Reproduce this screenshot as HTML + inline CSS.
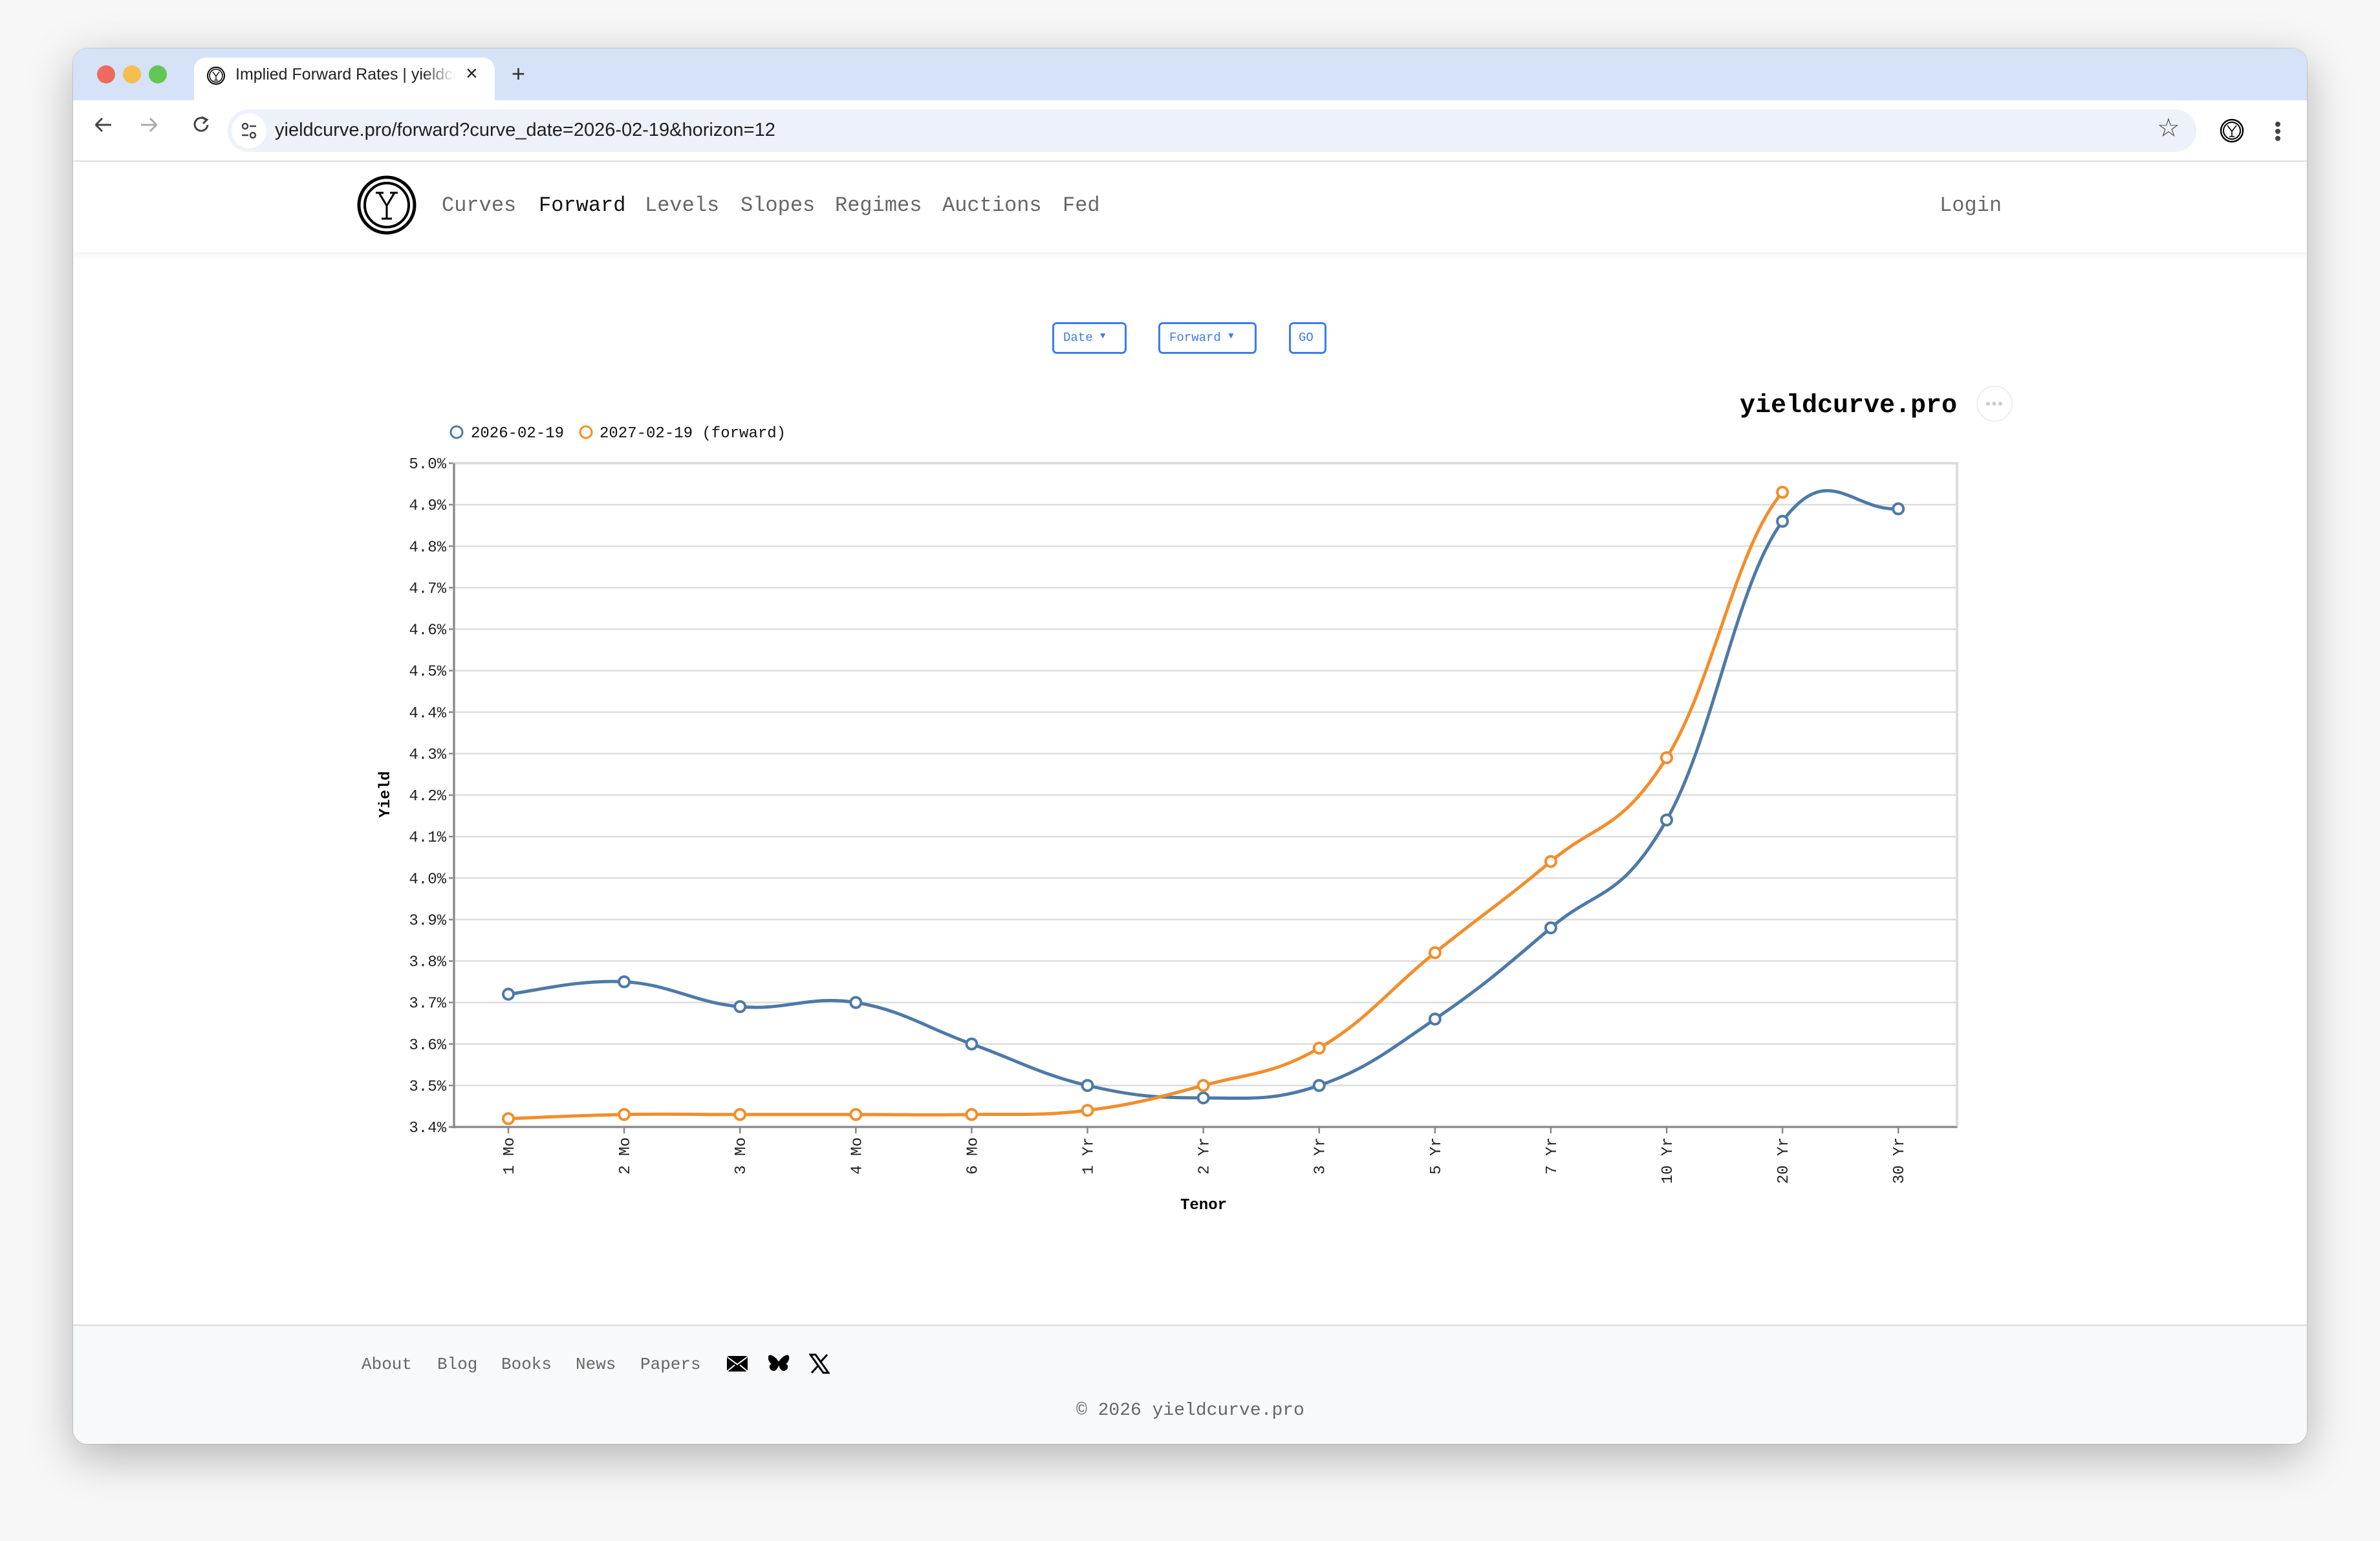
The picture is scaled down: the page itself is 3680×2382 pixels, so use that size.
<!DOCTYPE html>
<html><head><meta charset="utf-8">
<style>
*{margin:0;padding:0;box-sizing:border-box}
body{width:3680px;height:2382px;background:#f7f7f7;position:relative;overflow:hidden;font-family:"Liberation Mono",monospace}
.abs{position:absolute}
#win{left:113px;top:75px;width:3454px;height:2157px;border-radius:22px;background:#fff;overflow:hidden;box-shadow:0 20px 70px rgba(0,0,0,.28),0 0 0 1px rgba(0,0,0,.12)}
.sans{font-family:"Liberation Sans",sans-serif}
.nav a{position:absolute;top:224px;font-size:32px;color:#666;text-decoration:none}
.btn{position:absolute;top:423px;height:49px;border:3px solid #3b7ded;border-radius:7px;color:#3b7ded;font-size:19px;line-height:43px;padding:0 14px}
.ft{position:absolute;top:2019px;font-size:26px;color:#666}
</style></head><body>
<div id="win" class="abs">
 <div class="abs" style="left:0;top:0;width:3454px;height:80px;background:#d6e2f8"></div>
 <div class="abs" style="left:37px;top:26px;width:28px;height:28px;border-radius:50%;background:#ee6a5f"></div>
 <div class="abs" style="left:77px;top:26px;width:28px;height:28px;border-radius:50%;background:#f5be4f"></div>
 <div class="abs" style="left:117px;top:26px;width:28px;height:28px;border-radius:50%;background:#62c655"></div>
 <div class="abs" style="left:187px;top:14px;width:465px;height:70px;background:#fff;border-radius:18px 18px 0 0"></div>
 <svg class="abs" style="left:206px;top:27px" width="30" height="30" viewBox="0 0 30 30"><circle cx="15" cy="15" r="13" fill="none" stroke="#000" stroke-width="2"/><circle cx="15" cy="15" r="10" fill="none" stroke="#000" stroke-width="1.5"/><path d="M10 9l5 7 5-7M15 16v6M12 22h6" stroke="#000" fill="none" stroke-width="1.3"/></svg>
 <div class="abs sans" style="left:251px;top:26px;font-size:25px;color:#222;white-space:nowrap;width:340px;overflow:hidden;-webkit-mask-image:linear-gradient(90deg,#000 85%,transparent);mask-image:linear-gradient(90deg,#000 85%,transparent)">Implied Forward Rates | yieldcurve.pro</div>
 <div class="abs sans" style="left:607px;top:20px;font-size:32px;color:#222">×</div>
 <div class="abs sans" style="left:678px;top:18px;font-size:36px;color:#333">+</div>
 <svg class="abs" style="left:27px;top:98px" width="220" height="40" viewBox="0 0 220 40"><path d="M8 20h24M8 20l10-10M8 20l10 10" stroke="#444" stroke-width="3" fill="none"/><path d="M78 20h24M102 20l-10-10M102 20l-10 10" stroke="#aaa" stroke-width="3" fill="none"/><path d="M178 12a10 10 0 1 0 3 8" stroke="#444" stroke-width="3" fill="none"/><path d="M172 8l8 4-6 6" stroke="#444" stroke-width="3" fill="none"/></svg>
 <div class="abs" style="left:239px;top:94px;width:3044px;height:66px;border-radius:33px;background:#edf2fa"></div>
 <div class="abs" style="left:245px;top:100px;width:54px;height:54px;border-radius:27px;background:#fff"></div>
 <svg class="abs" style="left:257px;top:112px" width="30" height="30" viewBox="0 0 30 30"><circle cx="9" cy="8" r="4" fill="none" stroke="#444" stroke-width="2.5"/><path d="M16 8h10M4 22h10" stroke="#444" stroke-width="2.5"/><circle cx="21" cy="22" r="4" fill="none" stroke="#444" stroke-width="2.5"/></svg>
 <div class="abs sans" style="left:312px;top:110px;font-size:29px;color:#1f1f1f">yieldcurve.pro/forward?curve_date=2026-02-19&amp;horizon=12</div>
 <div class="abs sans" style="left:3222px;top:100px;font-size:40px;color:#444">☆</div>
 <svg class="abs" style="left:3319px;top:108px" width="38" height="38" viewBox="0 0 38 38"><circle cx="19" cy="19" r="17" fill="none" stroke="#000" stroke-width="2.5"/><circle cx="19" cy="19" r="13" fill="none" stroke="#000" stroke-width="2"/><path d="M12 11l7 9 7-9M19 20v8M15 28h8" stroke="#000" fill="none" stroke-width="1.6"/></svg>
 <div class="abs" style="left:3405px;top:113px;width:8px;height:8px;border-radius:4px;background:#444;box-shadow:0 11px 0 #444,0 22px 0 #444"></div>
 <div class="abs" style="left:0;top:173px;width:3454px;height:2px;background:#e2e2e2"></div>
 <div class="abs" style="left:0;top:175px;width:3454px;height:140px;background:#fff;box-shadow:0 4px 10px rgba(0,0,0,.06)"></div>
 <svg class="abs" style="left:438px;top:195px" width="94" height="94" viewBox="0 0 94 94"><circle cx="47" cy="47" r="43" fill="none" stroke="#000" stroke-width="5"/><circle cx="47" cy="47" r="34" fill="none" stroke="#000" stroke-width="4"/><path d="M30 28h12M52 28h12M35 28l12 20 12-20M47 48v20M39 68h16" stroke="#000" fill="none" stroke-width="3"/></svg>
 <div class="nav">
  <a style="left:570px">Curves</a><a style="left:720px;color:#111">Forward</a><a style="left:884px">Levels</a><a style="left:1032px">Slopes</a><a style="left:1178px">Regimes</a><a style="left:1344px">Auctions</a><a style="left:1530px">Fed</a><a style="left:2886px">Login</a>
 </div>
 <div class="btn" style="left:1514px;width:115px">Date <span style="font-size:14px;vertical-align:top;position:relative;top:-2px">▼</span></div>
 <div class="btn" style="left:1678px;width:152px">Forward <span style="font-size:14px;vertical-align:top;position:relative;top:-2px">▼</span></div>
 <div class="btn" style="left:1880px;width:58px;padding:0 12px">GO</div>
 <div class="abs" style="left:2577px;top:530px;font-size:40px;font-weight:bold;color:#000">yieldcurve.pro</div>
 <div class="abs" style="left:2943px;top:521px;width:56px;height:56px;border-radius:50%;border:2px solid #eee;color:#ccc;font-size:14px;text-align:center;line-height:50px;font-family:'Liberation Sans',sans-serif;letter-spacing:1px">●●●</div>
 <svg class="abs" id="chart" style="left:0;top:0" width="3454" height="2040"></svg>
 <div class="abs" style="left:0;top:1972px;width:3454px;height:185px;background:#f8f9fa;border-top:3px solid #e4e4e4"></div>
 <div class="ft" style="left:446px">About</div><div class="ft" style="left:563px">Blog</div><div class="ft" style="left:662px">Books</div><div class="ft" style="left:777px">News</div><div class="ft" style="left:877px">Papers</div>
 <svg class="abs" style="left:1010px;top:2020px" width="34" height="26" viewBox="0 0 34 26"><rect x="1" y="1" width="32" height="24" rx="3" fill="#000"/><path d="M2 3l15 11 15-11M2 24l11-9M32 24l-11-9" stroke="#fff" stroke-width="2" fill="none"/></svg>
 <svg class="abs" style="left:1074px;top:2018px" width="34" height="30" viewBox="0 0 34 30"><path d="M17 12C13 5 5 0 2 2c-3 3 0 12 4 13-5 2-4 9 2 11 4 1 8-4 9-9 1 5 5 10 9 9 6-2 7-9 2-11 4-1 7-10 4-13-3-2-11 3-15 10z" fill="#000"/></svg>
 <svg class="abs" style="left:1138px;top:2017px" width="32" height="32" viewBox="0 0 32 32"><path d="M2 2h8l20 28h-8z" fill="none" stroke="#000" stroke-width="3"/><path d="M28 2L17 14M4 30l11-12" stroke="#000" stroke-width="3"/></svg>
 <div class="ft" style="left:1551px;top:2090px;font-size:28px">© 2026 yieldcurve.pro</div>
</div>
<script>
(function(){
var svg=document.getElementById('chart');
var L=589,R=2913,T=641,B=1667;
function X(i){return 673+i*179.1;}
function Y(v){return T+(5.0-v)*641.25;}
var h='';
for(var k=0;k<=16;k++){var v=5.0-k*0.1,y=Y(v);
 h+='<line x1="'+L+'" x2="'+R+'" y1="'+y+'" y2="'+y+'" stroke="#ddd" stroke-width="2.5"/>';
 h+='<line x1="'+(L-8)+'" x2="'+L+'" y1="'+y+'" y2="'+y+'" stroke="#888" stroke-width="2.5"/>';
 h+='<text x="'+(L-12)+'" y="'+(y+8)+'" font-size="24" text-anchor="end" fill="#222" font-family="Liberation Mono,monospace">'+v.toFixed(1)+'%</text>';}
h+='<rect x="'+L+'" y="'+T+'" width="'+(R-L)+'" height="'+(B-T)+'" fill="none" stroke="#ddd" stroke-width="4"/>';
h+='<line x1="'+L+'" x2="'+L+'" y1="'+T+'" y2="'+(B+2)+'" stroke="#888" stroke-width="3"/>';
h+='<line x1="'+(L-8)+'" x2="'+R+'" y1="'+B+'" y2="'+B+'" stroke="#888" stroke-width="3"/>';
var labs=['1 Mo','2 Mo','3 Mo','4 Mo','6 Mo','1 Yr','2 Yr','3 Yr','5 Yr','7 Yr','10 Yr','20 Yr','30 Yr'];
for(var i=0;i<13;i++){var x=X(i);
 h+='<line x1="'+x+'" x2="'+x+'" y1="'+B+'" y2="'+(B+10)+'" stroke="#888" stroke-width="2.5"/>';
 h+='<text transform="translate('+(x+8)+','+(B+16)+') rotate(-90)" font-size="24" text-anchor="end" fill="#222" font-family="Liberation Mono,monospace">'+labs[i]+'</text>';}
h+='<text transform="translate(489,1153) rotate(-90)" font-size="24" font-weight="bold" text-anchor="middle" fill="#000" font-family="Liberation Mono,monospace">Yield</text>';
h+='<text x="1748" y="1794" font-size="24" font-weight="bold" text-anchor="middle" fill="#000" font-family="Liberation Mono,monospace">Tenor</text>';
h+='<circle cx="593" cy="593" r="9" fill="none" stroke="#4e79a7" stroke-width="3"/><text x="615" y="601" font-size="24" fill="#111" font-family="Liberation Mono,monospace">2026-02-19</text>';
h+='<circle cx="793" cy="593" r="9" fill="none" stroke="#f28e2b" stroke-width="3"/><text x="814" y="601" font-size="24" fill="#111" font-family="Liberation Mono,monospace">2027-02-19 (forward)</text>';
function path(vals){var p=vals.map(function(v,i){return [X(i),Y(v)];});
 var d='M'+p[0][0]+','+p[0][1];var t=5;
 for(var i=0;i<p.length-1;i++){var p0=p[i-1]||p[i],p1=p[i],p2=p[i+1],p3=p[i+2]||p2;
  if(!p[i+2]){p3=[2*p2[0]-p1[0],p2[1]];}
  var c1=[p1[0]+(p2[0]-p0[0])/t,p1[1]+(p2[1]-p0[1])/t],c2=[p2[0]-(p3[0]-p1[0])/t,p2[1]-(p3[1]-p1[1])/t];
  d+=' C'+c1+' '+c2+' '+p2;}
 return {d:d,p:p};}
function series(vals,col){var s=path(vals);var o='<path d="'+s.d+'" fill="none" stroke="'+col+'" stroke-width="5"/>';
 s.p.forEach(function(q){o+='<circle cx="'+q[0]+'" cy="'+q[1]+'" r="8" fill="#fff" stroke="'+col+'" stroke-width="4"/>';});return o;}
h+=series([3.72,3.75,3.69,3.70,3.60,3.50,3.47,3.50,3.66,3.88,4.14,4.86,4.89],'#4e79a7');
h+=series([3.42,3.43,3.43,3.43,3.43,3.44,3.50,3.59,3.82,4.04,4.29,4.93],'#f28e2b');
svg.innerHTML=h;
})();
</script>
</body></html>
